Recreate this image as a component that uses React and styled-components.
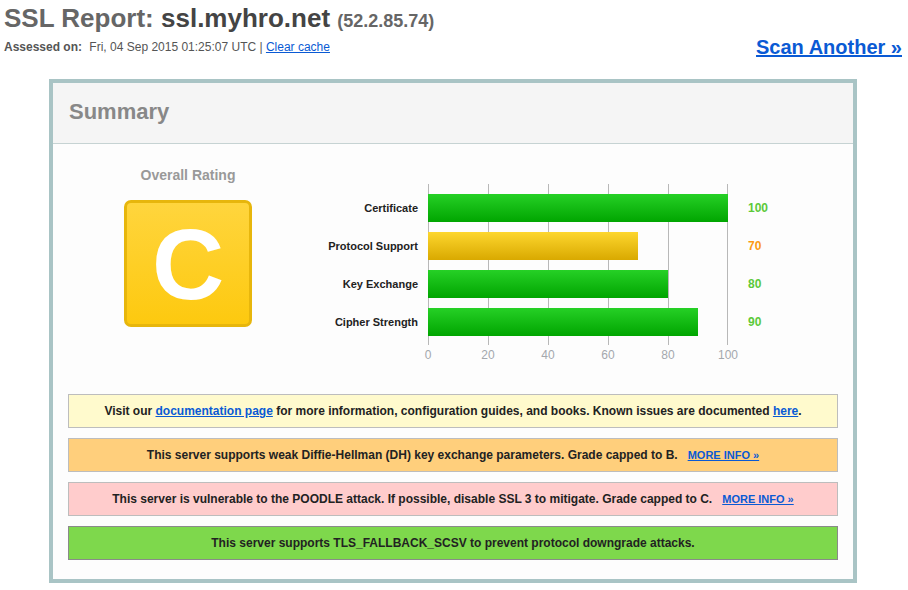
import styled, { createGlobalStyle } from 'styled-components';

const GlobalStyle = createGlobalStyle`
  body {
    margin: 0;
    background: #fff;
    font-family: "Liberation Sans", Arial, sans-serif;
  }
`;

const Page = styled.div`
  padding: 0 6px 0 4px;
`;

const TopBar = styled.div`
  display: flex;
  justify-content: space-between;
  align-items: flex-end;
`;

const TitleBlock = styled.div`
  padding-bottom: 4px;
`;

const Title = styled.h1`
  margin: 0;
  padding-top: 2px;
  font-size: 26px;
  line-height: 32px;
  font-weight: bold;
  color: #666;
  white-space: nowrap;
`;

const Host = styled.span`
  color: #444;
`;

const Ip = styled.span`
  font-size: 18px;
  line-height: 1;
  color: #666;
`;

const Assessed = styled.div`
  margin-top: 5px;
  font-size: 12px;
  line-height: 16px;
  color: #555;
`;

const AssessedLabel = styled.b`
  margin-right: 4px;
`;

const Link = styled.a`
  color: #0a5ad4;
  text-decoration: underline;
  cursor: pointer;
`;

const ScanLink = styled(Link)`
  font-size: 20px;
  line-height: 24px;
  font-weight: bold;
`;

const Panel = styled.div`
  width: 800px;
  margin: 20px auto 0;
  border: 4px solid #a9c4c5;
  background: #fdfdfd;
`;

const PanelHeader = styled.div`
  height: 60px;
  padding: 0 16px;
  line-height: 58px;
  background: #f5f5f5;
  border-bottom: 1px solid #c6d3d3;
  font-size: 22px;
  font-weight: bold;
  color: #888;
`;

const PanelBody = styled.div`
  display: flex;
  flex-direction: column;
  padding-bottom: 19px;
`;

const SummaryRow = styled.div`
  display: flex;
`;

const RatingColumn = styled.div`
  width: 270px;
  padding-top: 23px;
  display: flex;
  flex-direction: column;
  align-items: center;
`;

const RatingLabel = styled.div`
  font-size: 14px;
  line-height: 16px;
  font-weight: bold;
  color: #999;
`;

const GradeBox = styled.div`
  margin-top: 17px;
  width: 128px;
  height: 127px;
  box-sizing: border-box;
  border: 3px solid #e7b60c;
  border-radius: 7px;
  background: linear-gradient(#ffd53d, #fdc90f);
  color: #fff;
  font-size: 100px;
  line-height: 100px;
  font-weight: bold;
  display: flex;
  align-items: center;
  justify-content: center;
`;

const Chart = styled.div`
  padding-top: 40px;
`;

const ChartBody = styled.div`
  display: flex;
`;

const SideColumn = styled.div`
  display: flex;
  flex-direction: column;
  gap: 10px;
  padding-top: 10px;
  width: ${(p) => p.$width}px;
  padding-left: ${(p) => p.$padLeft || 0}px;
  padding-right: ${(p) => p.$padRight || 0}px;
  text-align: ${(p) => p.$align};
`;

const BarLabel = styled.div`
  height: 28px;
  line-height: 28px;
  font-size: 11px;
  font-weight: bold;
  color: #222;
  white-space: nowrap;
`;

const BarValue = styled.div`
  height: 28px;
  line-height: 28px;
  font-size: 12px;
  font-weight: bold;
  color: ${(p) => (p.$warn ? '#fb9a12' : '#5cc93a')};
`;

const Plot = styled.div`
  position: relative;
  width: 300px;
  padding: 10px 0 9px;
  display: flex;
  flex-direction: column;
  gap: 10px;
`;

const GridLine = styled.div`
  position: absolute;
  top: 0;
  bottom: 0;
  width: 1px;
  margin-left: ${(p) => (p.$last ? -1 : 0)}px;
  background: #b8b8b8;
`;

const Bar = styled.div`
  position: relative;
  height: 28px;
  background: ${(p) =>
    p.$warn
      ? 'linear-gradient(#fdd62e, #d9a900)'
      : 'linear-gradient(#26d026, #00a500)'};
`;

const Axis = styled.div`
  position: relative;
  margin: 3px 0 0 105px;
  width: 300px;
  height: 14px;
`;

const Tick = styled.span`
  position: absolute;
  top: 0;
  transform: translateX(-50%);
  font-size: 12px;
  line-height: 14px;
  color: #a4a8ad;
`;

const Notices = styled.div`
  margin-top: 32px;
  padding: 0 15px;
  display: flex;
  flex-direction: column;
  gap: 10px;
`;

const noticeColors = {
  info: { bg: '#fffacd', border: '#bdbdbd' },
  warning: { bg: '#ffcf7c', border: '#bdbdbd' },
  error: { bg: '#ffcccc', border: '#bdbdbd' },
  good: { bg: '#7ed84c', border: '#8a8a8a' },
};

const Notice = styled.div`
  padding: 9px 10px;
  line-height: 14px;
  font-size: 12px;
  font-weight: bold;
  color: #222;
  text-align: center;
  background: ${(p) => noticeColors[p.$kind].bg};
  border: 1px solid ${(p) => noticeColors[p.$kind].border};
`;

const MoreInfo = styled(Link)`
  margin-left: 10px;
  font-size: 11px;
`;

const bars = [
  { label: 'Certificate', value: 100 },
  { label: 'Protocol Support', value: 70, warn: true },
  { label: 'Key Exchange', value: 80 },
  { label: 'Cipher Strength', value: 90 },
];

const ticks = [0, 20, 40, 60, 80, 100];

const App = () => {
  return (
    <Page>
      <GlobalStyle />
      <TopBar>
        <TitleBlock>
          <Title>
            SSL Report: <Host>ssl.myhro.net</Host> <Ip>(52.2.85.74)</Ip>
          </Title>
          <Assessed>
            <AssessedLabel>Assessed on:</AssessedLabel> Fri, 04 Sep 2015 01:25:07 UTC |{' '}
            <Link>Clear cache</Link>
          </Assessed>
        </TitleBlock>
        <ScanLink>Scan Another »</ScanLink>
      </TopBar>

      <Panel>
        <PanelHeader>Summary</PanelHeader>
        <PanelBody>
          <SummaryRow>
            <RatingColumn>
              <RatingLabel>Overall Rating</RatingLabel>
              <GradeBox>C</GradeBox>
            </RatingColumn>

            <Chart>
              <ChartBody>
                <SideColumn $width={95} $padRight={10} $align="right">
                  {bars.map((b) => (
                    <BarLabel key={b.label}>{b.label}</BarLabel>
                  ))}
                </SideColumn>
                <Plot>
                  {ticks.map((t) => (
                    <GridLine key={t} $last={t === 100} style={{ left: `${t}%` }} />
                  ))}
                  {bars.map((b) => (
                    <Bar key={b.label} $warn={b.warn} style={{ width: `${b.value}%` }} />
                  ))}
                </Plot>
                <SideColumn $width={40} $padLeft={20} $align="left">
                  {bars.map((b) => (
                    <BarValue key={b.label} $warn={b.warn}>
                      {b.value}
                    </BarValue>
                  ))}
                </SideColumn>
              </ChartBody>
              <Axis>
                {ticks.map((t) => (
                  <Tick key={t} style={{ left: `${t}%` }}>
                    {t}
                  </Tick>
                ))}
              </Axis>
            </Chart>
          </SummaryRow>

          <Notices>
            <Notice $kind="info">
              Visit our <Link>documentation page</Link> for more information, configuration guides,
              and books. Known issues are documented <Link>here</Link>.
            </Notice>
            <Notice $kind="warning">
              This server supports weak Diffie-Hellman (DH) key exchange parameters. Grade capped to
              B.
              <MoreInfo>MORE INFO »</MoreInfo>
            </Notice>
            <Notice $kind="error">
              This server is vulnerable to the POODLE attack. If possible, disable SSL 3 to mitigate.
              Grade capped to C.
              <MoreInfo>MORE INFO »</MoreInfo>
            </Notice>
            <Notice $kind="good">
              This server supports TLS_FALLBACK_SCSV to prevent protocol downgrade attacks.
            </Notice>
          </Notices>
        </PanelBody>
      </Panel>
    </Page>
  );
};

export default App;
